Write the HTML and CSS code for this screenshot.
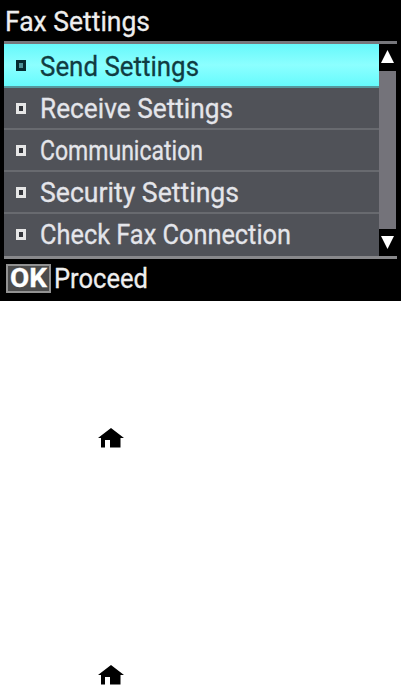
FILE: index.html
```html
<!DOCTYPE html>
<html lang="en">

<head>
    <meta charset="UTF-8">
    <meta name="viewport"
          content="width=device-width, initial-scale=1.0">
    <title>Fax Settings</title>
    <link rel="stylesheet" href="styles.css">
</head>

<body>

<div class="screen">
    <svg class="title" width="397" height="41">
        <text x="5" y="31" textLength="145" lengthAdjust="spacingAndGlyphs">Fax Settings</text>
    </svg>
    <div class="panel">
        <ul class="menu">
            <li class="menu-item selected">
                <span class="bullet"></span>
                <svg class="label" width="330" height="40">
                    <text x="0" y="31" textLength="159" lengthAdjust="spacingAndGlyphs">Send Settings</text>
                </svg>
            </li>
            <li class="menu-item">
                <span class="bullet"></span>
                <svg class="label" width="330" height="40">
                    <text x="0" y="30" textLength="193" lengthAdjust="spacingAndGlyphs">Receive Settings</text>
                </svg>
            </li>
            <li class="menu-item">
                <span class="bullet"></span>
                <svg class="label" width="330" height="40">
                    <text x="0" y="30" textLength="163" lengthAdjust="spacingAndGlyphs">Communication</text>
                </svg>
            </li>
            <li class="menu-item">
                <span class="bullet"></span>
                <svg class="label" width="330" height="40">
                    <text x="0" y="30" textLength="199" lengthAdjust="spacingAndGlyphs">Security Settings</text>
                </svg>
            </li>
            <li class="menu-item">
                <span class="bullet"></span>
                <svg class="label" width="330" height="40">
                    <text x="0" y="30" textLength="251" lengthAdjust="spacingAndGlyphs">Check Fax Connection</text>
                </svg>
            </li>
        </ul>
        <div class="scrollbar">
            <svg class="arrow" width="18" height="27">
                <path d="M8.5 6 L15 19 H2 Z"/>
            </svg>
            <div class="thumb"></div>
            <svg class="arrow" width="18" height="27">
                <path d="M2 7 H15 L8.5 20 Z"/>
            </svg>
        </div>
    </div>
    <div class="footer">
        <div class="ok-key">
            <svg width="41" height="25">
                <text x="2" y="21" textLength="37" lengthAdjust="spacingAndGlyphs">OK</text>
            </svg>
        </div>
        <svg class="action" width="120" height="42">
            <text x="3" y="29" textLength="94" lengthAdjust="spacingAndGlyphs">Proceed</text>
        </svg>
    </div>
</div>

<div class="home-icons">
    <svg class="home" width="26" height="20" viewBox="0 0 26 20">
        <path d="M13 0 L26 10 H22.5 V19.5 H12 V12 H7 V19.5 H3 V10 H0 Z"/>
    </svg>
    <svg class="home" width="26" height="20" viewBox="0 0 26 20">
        <path d="M13 0 L26 10 H22.5 V19.5 H12 V12 H7 V19.5 H3 V10 H0 Z"/>
    </svg>
</div>

</body>

</html>
```

FILE: styles.css
```css
body {
    margin: 0;
    background-color: #fff;
    font-family: Roboto, "Liberation Sans", sans-serif;
    font-size: 28.5px;
    overflow: hidden;
}

svg {
    display: block;
    overflow: visible;
}

.screen {
    height: 301px;
    background-color: #000;
    color: #eee;
}

.screen text {
    fill: currentColor;
    stroke: currentColor;
    stroke-width: 0.3px;
}

.panel {
    display: flex;
    height: 212px;
    margin: 0 4px;
    border-top: 3px solid #77777c;
    border-bottom: 3px solid #88888b;
}

.menu {
    flex: 1;
    margin: 0;
    padding: 0;
    list-style: none;
    background-color: #505258;
}

.menu-item {
    display: flex;
    align-items: center;
    box-sizing: border-box;
    height: 42px;
    padding-left: 12px;
    border-bottom: 2px solid #686a6f;
    color: #e4e5ea;
}

.menu-item:last-child {
    height: 40px;
    border-bottom: none;
}

.menu-item.selected {
    height: 44px;
    border-bottom-color: #55999e;
    background: linear-gradient(#66f8fb, #8cffff 50%, #66fbfd);
    color: #103c42;
}

.bullet {
    box-sizing: border-box;
    width: 10px;
    height: 11px;
    border: 3px solid #e6e6e6;
    background-color: #33353a;
}

.selected .bullet {
    border-color: #062b30;
    background-color: #4d9297;
}

.label {
    margin-left: 14px;
}

.scrollbar {
    display: flex;
    flex-direction: column;
    width: 18px;
    background-color: #000;
}

.arrow {
    fill: #fff;
}

.thumb {
    flex: 1;
    margin-right: 1px;
    background-color: #74737a;
}

.footer {
    display: flex;
    padding-left: 6px;
}

.ok-key {
    box-sizing: border-box;
    width: 45px;
    height: 29px;
    margin-top: 5px;
    border: 2px solid #929292;
    background-color: #4c4c4c;
    color: #fff;
    font-size: 26px;
    font-weight: bold;
}

.home-icons {
    display: flex;
    flex-direction: column;
    gap: 217px;
    padding: 127px 0 0 98px;
}
```
